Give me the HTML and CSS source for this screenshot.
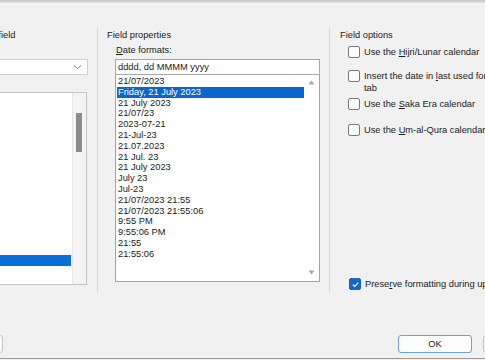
FILE: index.html
```html
<!DOCTYPE html>
<html lang="en">
<head>
    <meta charset="UTF-8">
    <title>Field</title>
    <link rel="stylesheet" href="styles.css">
</head>
<body>

<div class="topbar"></div>

<div class="dialog">
    <!-- Coluna da esquerda: escolher o campo (quase toda fora da tela) -->
    <section class="col col-choose">
        <div class="col-title">Please choose a field</div>
        <div class="indent">
            <div class="label"></div>
            <div class="combo">
                <svg class="chevron" width="9" height="6" viewBox="0 0 9 6"><path d="M1 1.5 L4.5 4.5 L8 1.5" fill="none" stroke="#777" stroke-width="1"/></svg>
            </div>
            <div class="label"></div>
            <div class="listbox names">
                <div class="names-items">
                    <div class="item"></div>
                    <div class="item"></div>
                    <div class="item"></div>
                    <div class="item"></div>
                    <div class="item"></div>
                    <div class="item"></div>
                    <div class="item"></div>
                    <div class="item"></div>
                    <div class="item"></div>
                    <div class="item"></div>
                    <div class="item"></div>
                    <div class="item"></div>
                    <div class="item"></div>
                    <div class="item"></div>
                    <div class="item"></div>
                    <div class="item selected"></div>
                </div>
                <div class="vscroll">
                    <div class="thumb"></div>
                </div>
            </div>
        </div>
    </section>

    <!-- Coluna do meio: propriedades -->
    <section class="col col-props">
        <div class="col-title">Field properties</div>
        <div class="indent">
            <div class="label"><u>D</u>ate formats:</div>
            <div class="textbox">dddd, dd MMMM yyyy</div>
            <div class="listbox formats">
                <div class="format-items">
                    <div class="item">21/07/2023</div>
                    <div class="item selected">Friday, 21 July 2023</div>
                    <div class="item">21 July 2023</div>
                    <div class="item">21/07/23</div>
                    <div class="item">2023-07-21</div>
                    <div class="item">21-Jul-23</div>
                    <div class="item">21.07.2023</div>
                    <div class="item">21 Jul. 23</div>
                    <div class="item">21 July 2023</div>
                    <div class="item">July 23</div>
                    <div class="item">Jul-23</div>
                    <div class="item">21/07/2023 21:55</div>
                    <div class="item">21/07/2023 21:55:06</div>
                    <div class="item">9:55 PM</div>
                    <div class="item">9:55:06 PM</div>
                    <div class="item">21:55</div>
                    <div class="item">21:55:06</div>
                </div>
                <div class="vscroll thin">
                    <svg width="7" height="5" viewBox="0 0 7 5"><path d="M0.5 4.5 L3.5 0.5 L6.5 4.5 Z" fill="#a8a8a8"/></svg>
                    <svg width="7" height="5" viewBox="0 0 7 5"><path d="M0.5 0.5 L3.5 4.5 L6.5 0.5 Z" fill="#a8a8a8"/></svg>
                </div>
            </div>
        </div>
    </section>

    <!-- Coluna da direita: opções -->
    <section class="col col-options">
        <div class="col-title">Field options</div>
        <div class="indent options">
            <div class="check-row first"><span class="box"></span><span>Use the <u>H</u>ijri/Lunar calendar</span></div>
            <div class="check-row two-line"><span class="box"></span><span class="wrap">Insert the date in <u>l</u>ast used format<br>tab</span></div>
            <div class="check-row"><span class="box"></span><span>Use the <u>S</u>aka Era calendar</span></div>
            <div class="check-row last"><span class="box"></span><span>Use the <u>U</u>m-al-Qura calendar</span></div>
        </div>
        <div class="indent preserve">
            <div class="check-row"><span class="box checked"><svg width="9" height="9" viewBox="0 0 9 9"><path d="M1.8 4.6 L3.7 6.4 L7.3 2.6" fill="none" stroke="#fff" stroke-width="1.2"/></svg></span><span>Prese<u>r</u>ve formatting during updates</span></div>
        </div>
    </section>
</div>

<div class="buttons">
    <div class="btn btn-left"></div>
    <div class="spacer"></div>
    <div class="btn ok">OK</div>
    <div class="btn"></div>
</div>

<div class="bottomline"></div>

</body>
</html>
```

FILE: styles.css
```css
body {
    margin: 0;
    width: 485px;
    height: 360px;
    overflow: hidden;
    background-color: #f1f1f1;
    font-family: "Liberation Sans", Arial, sans-serif;
    font-size: 9.3px;
    color: #1b1b1b;
}
.topbar {
    height: 3px;
    background: linear-gradient(#c4c4c4, #e4e4e4);
}
.dialog {
    display: flex;
    margin-top: 25px;
    margin-left: -90px;
    height: 264px;
}
.col {
    flex: none;
    border-right: 1px solid #d6d6d6;
}
.col-choose {
    width: 187px;
}
.col-props {
    width: 231px;
}
.col-options {
    width: 200px;
    border-right: none;
    display: flex;
    flex-direction: column;
}
.col-title {
    height: 14px;
    line-height: 14px;
    padding-left: 10px;
    white-space: nowrap;
}
.col-choose .col-title {
    padding-left: 17px;
}
.col-props .col-title {
    padding-left: 9px;
}
.indent {
    padding-left: 17px;
    padding-right: 9px;
}
.col-choose .indent {
    padding-left: 23px;
}
.label {
    height: 17px;
    line-height: 17px;
    padding-left: 1px;
}
.combo {
    height: 14px;
    background-color: #fff;
    border: 1px solid #cfcfcf;
    display: flex;
    align-items: center;
    justify-content: flex-end;
    padding-right: 5px;
}
.textbox {
    height: 14px;
    line-height: 14px;
    background-color: #fff;
    border: 1px solid #a8a8a8;
    padding-left: 2px;
}
.listbox {
    background-color: #fff;
    border: 1px solid #a3a3a3;
    display: flex;
}
.names {
    height: 191px;
    margin-right: 1px;
    border-color: #c4c4c4;
}
.names-items {
    flex: 1;
    display: flex;
    flex-direction: column;
    overflow: hidden;
}
.names-items .item {
    flex: none;
    height: 10.8px;
}
.vscroll {
    flex: none;
    width: 14px;
    background-color: #f4f4f4;
    border-left: 1px solid #e6e6e6;
    padding-top: 20px;
    box-sizing: border-box;
}
.thumb {
    width: 6px;
    height: 39px;
    margin-left: 3px;
    background-color: #8c8c8c;
}
.formats {
    height: 206px;
    border-top: none;
}
.format-items {
    flex: 1;
    padding-left: 1px;
    padding-top: 1px;
}
.format-items .item {
    height: 10.8px;
    line-height: 10.8px;
    padding-left: 1px;
    white-space: nowrap;
}
.item.selected {
    background-color: #0a66cc;
    color: #fff;
}
.names-items .item.selected {
    background-color: #0b6fd8;
    margin-right: 1px;
}
.vscroll.thin {
    width: 15px;
    background-color: #fff;
    border-left: none;
    padding: 5px 0 6px 4px;
    display: flex;
    flex-direction: column;
    justify-content: space-between;
}
.options {
    padding-left: 18px;
    display: flex;
    flex-direction: column;
}
.check-row {
    display: flex;
    align-items: center;
    gap: 4px;
    height: 16px;
    white-space: nowrap;
}
.check-row.first {
    margin-top: 2px;
}
.check-row.two-line {
    align-items: flex-start;
    line-height: 12px;
    height: 24px;
    margin-top: 10px;
    margin-bottom: 2px;
}
.two-line .box {
    margin-top: 0;
}
.check-row.last {
    margin-top: 10px;
}
.box {
    flex: none;
    width: 10px;
    height: 10px;
    border: 1px solid #7a7a7a;
    border-radius: 2px;
    background-color: #fbfbfb;
    display: flex;
    align-items: center;
    justify-content: center;
}
.box.checked {
    background-color: #1467c4;
    border-color: #1467c4;
}
.preserve {
    margin-top: auto;
    padding-left: 19px;
}
.preserve .check-row {
    height: 14px;
    margin-bottom: 1px;
}
.buttons {
    display: flex;
    margin-top: 43px;
    margin-left: -70px;
    height: 18px;
}
.btn {
    flex: none;
    width: 72px;
    height: 16px;
    line-height: 16px;
    text-align: center;
    background-color: #fdfdfd;
    border: 1px solid #c4c4c4;
    border-radius: 3px;
}
.btn-left {
    width: 71px;
}
.spacer {
    flex: none;
    width: 395px;
}
.ok {
    border-color: #6f9fd6;
    margin-right: 11px;
}
.bottomline {
    margin-top: 5px;
    height: 1px;
    background-color: #9a9a9a;
}
```
